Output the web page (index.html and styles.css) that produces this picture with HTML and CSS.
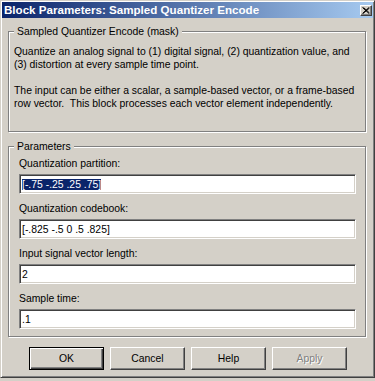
FILE: index.html
```html
<!DOCTYPE html>
<html lang="en">
<head>
  <meta charset="UTF-8">
  <title>Block Parameters: Sampled Quantizer Encode</title>
  <link rel="stylesheet" href="styles.css">
</head>
<body>

<div class="window">
  <div class="caption">
    <span class="caption-title">Block Parameters: Sampled Quantizer Encode</span>
    <span class="close-btn">
      <svg width="8" height="7" viewBox="0 0 8 7">
        <path d="M0.5 0.5 L7 6.5 M1.5 0.5 L7.5 6 M7 0.5 L0.5 6.5 M7.5 1 L1 6.5" stroke="#000" stroke-width="1" fill="none"/>
      </svg>
    </span>
  </div>

  <fieldset class="group desc">
    <legend>Sampled Quantizer Encode (mask)</legend>
    <p>Quantize an analog signal to (1) digital signal, (2) quantization value, and (3) distortion at every sample time point.</p>
    <p>The input can be either a scalar, a sample-based vector, or a frame-based row vector.&nbsp; This block processes each vector element independently.</p>
  </fieldset>

  <fieldset class="group params">
    <legend>Parameters</legend>
    <div class="fields">
      <div class="field-label">Quantization partition:</div>
      <div class="field"><span class="sel">[-.75 -.25 .25 .75]</span></div>

      <div class="field-label">Quantization codebook:</div>
      <div class="field">[-.825 -.5 0 .5 .825]</div>

      <div class="field-label">Input signal vector length:</div>
      <div class="field">2</div>

      <div class="field-label">Sample time:</div>
      <div class="field">.1</div>
    </div>
  </fieldset>

  <div class="buttons">
    <button class="btn default">OK</button>
    <button class="btn">Cancel</button>
    <button class="btn">Help</button>
    <button class="btn disabled">Apply</button>
  </div>
</div>

</body>
</html>
```

FILE: styles.css
```css
body {
  margin: 0;
  background-color: #d4d0c8;
  font-family: 'Liberation Sans', Arial, sans-serif;
  font-size: 10.4px;
  color: #000;
}

.window {
  box-sizing: border-box;
  width: 375px;
  height: 378px;
  padding: 1px;
  background-color: #d4d0c8;
  border: 1px solid;
  border-color: #d4d0c8 #404040 #404040 #d4d0c8;
  box-shadow: inset 1px 1px 0 #fff, inset -1px -1px 0 #808080;
}

.caption {
  display: flex;
  align-items: center;
  justify-content: space-between;
  height: 16px;
  padding: 0 1px 0 2px;
  background: linear-gradient(to right, #0a246a, #a6caf0);
}

.caption-title {
  color: #fff;
  font-weight: bold;
  font-size: 11.6px;
  line-height: 16px;
  white-space: nowrap;
}

.close-btn {
  box-sizing: border-box;
  display: flex;
  align-items: center;
  justify-content: center;
  width: 12px;
  height: 11px;
  background-color: #d4d0c8;
  border: 1px solid;
  border-color: #fff #404040 #404040 #fff;
  box-shadow: inset -1px -1px 0 #808080;
}

.group {
  margin: 0 7px 0 6px;
  padding: 4px 5px 7px;
  min-width: 0;
  border: 1px solid #808080;
  box-shadow: 1px 1px 0 #fff, inset 1px 1px 0 #fff;
}

.group legend {
  padding: 0 3px;
  line-height: 13px;
  background-color: #d4d0c8;
}

.desc {
  margin-top: 7px;
  padding-top: 7px;
  padding-bottom: 21px;
}

.desc p {
  margin: 0 0 13px;
  line-height: 13px;
}

.desc p:last-child {
  margin-bottom: 0;
}

.params {
  margin-top: 8px;
}

.fields {
  padding-left: 5px;
}

.field-label {
  line-height: 13px;
  white-space: nowrap;
}

.field {
  box-sizing: border-box;
  width: 337px;
  height: 20px;
  margin: 4px 0 8px;
  padding: 2px 2px 0;
  line-height: 16px;
  background-color: #fff;
  white-space: nowrap;
  border: 1px solid;
  border-color: #808080 #fff #fff #808080;
  box-shadow: inset 1px 1px 0 #404040, inset -1px -1px 0 #d4d0c8;
}

.field:last-child {
  margin-bottom: 0;
}

.sel {
  background-color: #0a246a;
  color: #fff;
}

.buttons {
  display: flex;
  gap: 6px;
  margin-top: 10px;
  padding-left: 27px;
}

.btn {
  box-sizing: border-box;
  width: 75px;
  height: 23px;
  padding: 0;
  font-family: inherit;
  font-size: 10.4px;
  color: #000;
  background-color: #d4d0c8;
  border: 1px solid;
  border-color: #fff #404040 #404040 #fff;
  box-shadow: inset -1px -1px 0 #808080;
  border-radius: 0;
}

.btn.default {
  border: 1px solid #000;
  box-shadow: inset 1px 1px 0 #fff, inset -1px -1px 0 #404040, inset -2px -2px 0 #808080;
}

.btn.disabled {
  color: #808080;
  text-shadow: 1px 1px 0 #fff;
}
```
